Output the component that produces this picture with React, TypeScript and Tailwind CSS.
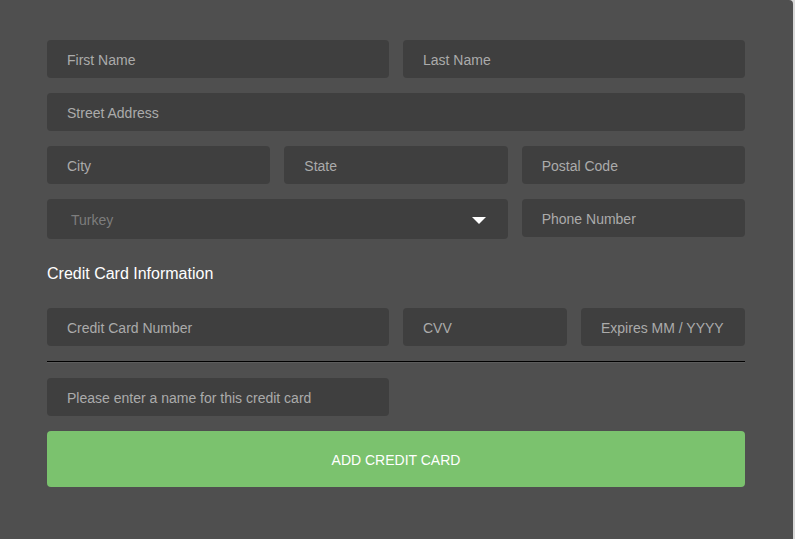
import React from "react";

const Field = ({ label, className = "" }: { label: string; className?: string }) => (
  <div
    className={`h-[38px] rounded-[4px] bg-[#3f3f3f] flex items-center pl-[20px] pt-[2px] text-[14px] text-[#ababab] ${className}`}
  >
    {label}
  </div>
);

export default function App() {
  return (
    <div className="w-[795px] h-[539px] bg-[#d9d9d9]" style={{ fontFamily: '"Liberation Sans", Arial, sans-serif' }}>
      <div className="w-[793px] h-[539px] bg-[#4f4f4f] rounded-tr-[4px] pl-[47px] pr-[48px] pt-[40px] flex flex-col">
        <div className="grid grid-cols-2 gap-x-[14px]">
          <Field label="First Name" />
          <Field label="Last Name" />
        </div>
        <div className="mt-[15px]">
          <Field label="Street Address" />
        </div>
        <div className="mt-[15px] grid grid-cols-3 gap-x-[14px]">
          <Field label="City" />
          <Field label="State" />
          <Field label="Postal Code" />
        </div>
        <div className="mt-[15px] grid grid-cols-3 gap-x-[14px] items-start">
          <div className="col-span-2 h-[40px] rounded-[4px] bg-[#3f3f3f] flex items-center justify-between pl-[24px] pr-[22px] pt-[2px] text-[14px] text-[#7d7d7d]">
            <span>Turkey</span>
            <svg width="14" height="7" viewBox="0 0 14 7">
              <polygon points="0,0 14,0 7,7" fill="#ffffff" />
            </svg>
          </div>
          <Field label="Phone Number" />
        </div>
        <div className="mt-[24px] h-[20px] flex items-center pt-[2px] text-[16px] text-white">Credit Card Information</div>
        <div className="mt-[25px] grid grid-cols-12 gap-x-[14px]">
          <Field label="Credit Card Number" className="col-span-6" />
          <Field label="CVV" className="col-span-3" />
          <Field label="Expires MM / YYYY" className="col-span-3" />
        </div>
        <div className="mt-[15px] h-[2px] border-t border-black border-b border-b-[#5c5c5c]" />
        <div className="mt-[15px] grid grid-cols-2 gap-x-[14px]">
          <Field label="Please enter a name for this credit card" />
        </div>
        <button className="mt-[15px] h-[56px] rounded-[4px] bg-[#7bc26e] text-white text-[14px] flex items-center justify-center pt-[2px]">
          ADD CREDIT CARD
        </button>
      </div>
    </div>
  );
}
